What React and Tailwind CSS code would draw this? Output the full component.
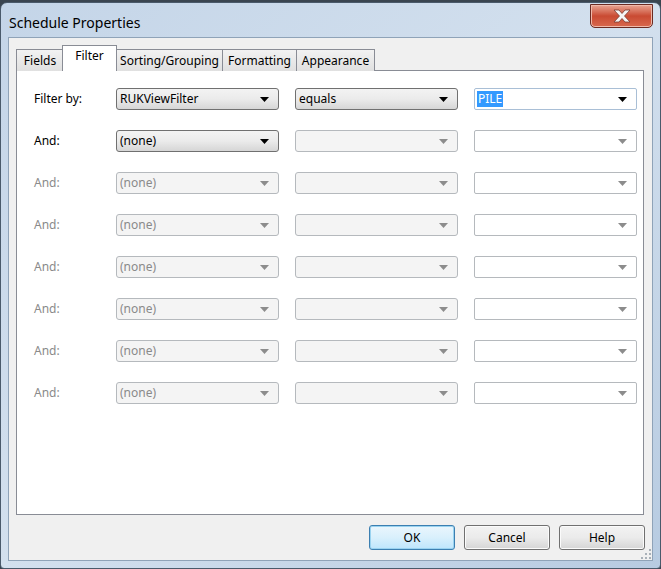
import React from 'react';

const font = { fontFamily: '"Noto Sans", "Open Sans", sans-serif' };

function Arrow({ disabled }) {
  return (
    <svg width="9" height="5" viewBox="0 0 9 5" className="shrink-0">
      <path d="M0 0 H9 L4.5 5 Z" fill={disabled ? '#8c8c8c' : '#000'} />
    </svg>
  );
}

// dropdown-list style combo (gradient button look)
function DropList({ value, disabled }) {
  if (disabled) {
    return (
      <div className="w-[163px] h-[22px] flex items-center justify-between pl-[3px] pr-[9px] rounded-[3px] border border-[#b5b9bd] bg-[#f4f4f4] text-[#8a8a8a]">
        <span>{value}</span>
        <Arrow disabled />
      </div>
    );
  }
  return (
    <div className="w-[163px] h-[22px] flex items-center justify-between pl-[3px] pr-[9px] rounded-[3px] border border-[#707070] bg-gradient-to-b from-[#f3f3f3] via-[#ebebeb] to-[#d6d6d6] text-black">
      <span>{value}</span>
      <Arrow />
    </div>
  );
}

// editable combo (white box)
function EditCombo({ value, disabled }) {
  return (
    <div
      className={
        'w-[163px] h-[22px] flex items-center justify-between pl-[2px] pr-[9px] rounded-[2px] border bg-white ' +
        (disabled ? 'border-[#b5b9bd]' : 'border-[#a9bfd6]')
      }
    >
      {value ? <span className="bg-[#3399ff] text-white leading-[16px] px-[1px]">{value}</span> : <span />}
      <Arrow disabled={disabled} />
    </div>
  );
}

function Row({ label, first, enabled }) {
  return (
    <div className="flex items-center h-[22px]">
      <div className={'w-[82px] ' + (enabled ? 'text-black' : 'text-[#8a8a8a]')}>{label}</div>
      <div className="flex gap-[16px]">
        {first ? (
          <>
            <DropList value="RUKViewFilter" />
            <DropList value="equals" />
            <EditCombo value="PILE" />
          </>
        ) : (
          <>
            <DropList value="(none)" disabled={!enabled} />
            <DropList value="" disabled />
            <EditCombo value="" disabled />
          </>
        )}
      </div>
    </div>
  );
}

function Button({ children, primary }) {
  return (
    <div
      className={
        'w-[86px] h-[25px] flex items-center justify-center rounded-[3px] border text-black ' +
        (primary
          ? 'border-[#3c7fb1] bg-gradient-to-b from-[#eaf6fd] via-[#d9f0fc] to-[#bee6fd] shadow-[inset_0_0_0_1px_#9ad3f0]'
          : 'border-[#707070] bg-gradient-to-b from-[#f2f2f2] via-[#ebebeb] to-[#d5d5d5] shadow-[inset_0_0_0_1px_#fbfbfb]')
      }
    >
      {children}
    </div>
  );
}

const tabs = [
  { label: 'Fields', cls: 'w-[48px]' },
  { label: 'Filter', cls: 'w-[55px] -ml-[2px]', sel: true },
  { label: 'Sorting/Grouping', cls: 'w-[107px] -ml-[1px]' },
  { label: 'Formatting', cls: 'w-[75px] -ml-[1px]' },
  { label: 'Appearance', cls: 'w-[79px] -ml-[1px]' },
];

export default function App() {
  return (
    <div className="w-[661px] h-[569px] overflow-hidden bg-[#3a4550] text-[12px]" style={font}>
      <div className="mt-[2px] h-[567px] flex flex-col rounded-t-[7px] rounded-b-[4px] border border-[#4a5a6b] bg-gradient-to-br from-[#c4d5e8] via-[#d3e0ee] to-[#b7cbe1]">
        {/* title bar */}
        <div className="h-[34px] flex items-start justify-between pl-[8px] pr-[7px]">
          <div className="pt-[10px] text-[14px] leading-[20px] text-black">Schedule Properties</div>
          <div className="mt-[1px] w-[63px] h-[24px] flex items-center justify-center rounded-b-[5px] border border-[#6b2b22] bg-gradient-to-b from-[#e8a493] via-[#c94a32] to-[#d8684e] shadow-[inset_0_0_0_1px_#f0b9aa]">
            <svg width="22" height="14" viewBox="0 0 22 14">
              <path d="M3 1 L8 1 L11 4.5 L14 1 L19 1 L13.5 7 L19 13 L14 13 L11 9.5 L8 13 L3 13 L8.5 7 Z" fill="#f4f4f4" stroke="#7a3a30" strokeWidth="0.8" />
            </svg>
          </div>
        </div>
        {/* client area */}
        <div className="mx-[7px] mb-[7px] flex-1 flex flex-col border border-[#8fa3b8] bg-[#f0f0f0] pt-[7px] px-[7px] relative">
          {/* tabs */}
          <div className="flex items-end h-[26px] relative z-10">
            {tabs.map((t) =>
              t.sel ? (
                <div key={t.label} className={t.cls + ' relative h-[26px] pt-[1px] text-center border border-b-0 border-[#898c95] bg-white leading-[18px] text-black'}>
                  {t.label}
                </div>
              ) : (
                <div key={t.label} className={t.cls + ' h-[22px] pt-[2px] text-center border border-b-0 border-[#898c95] bg-gradient-to-b from-[#f2f2f2] to-[#e0e0e0] leading-[18px] text-black'}>
                  {t.label}
                </div>
              )
            )}
          </div>
          {/* tab panel */}
          <div className="h-[445px] -mt-[1px] mr-[1px] border border-[#898c95] bg-white pt-[17px] pl-[17px] flex flex-col gap-[20px]">
            <Row label="Filter by:" first enabled />
            <Row label="And:" enabled />
            {[0, 1, 2, 3, 4, 5].map((i) => (
              <Row key={i} label="And:" />
            ))}
          </div>
          {/* buttons */}
          <div className="flex justify-end gap-[9px] pt-[10px]">
            <Button primary>OK</Button>
            <Button>Cancel</Button>
            <Button>Help</Button>
          </div>
          {/* size grip */}
          <svg className="absolute right-[1px] bottom-[1px]" width="11" height="11" viewBox="0 0 11 11">
            {[[9, 1], [9, 5], [5, 5], [9, 9], [5, 9], [1, 9]].map(([x, y], i) => (
              <rect key={i} x={x} y={y} width="2" height="2" fill="#a8b0b8" />
            ))}
          </svg>
        </div>
      </div>
    </div>
  );
}
